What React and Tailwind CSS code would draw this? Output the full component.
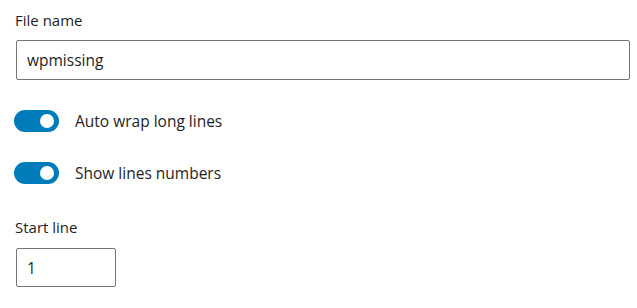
import React, { useState } from "react";

const Toggle = ({ label }) => {
  const [on, setOn] = useState(true);
  return (
    <label className="flex items-center gap-4 -ml-[2px] cursor-pointer">
      <button
        type="button"
        onClick={() => setOn(!on)}
        className={`relative h-[22px] w-[45px] rounded-full ${on ? "bg-[#007cba]" : "bg-[#949494]"}`}
      >
        <span
          className={`absolute top-[4px] h-[14px] w-[14px] rounded-full bg-white ${on ? "left-[26px]" : "left-[5px]"}`}
        />
      </button>
      <span className="text-[15.5px] leading-5 text-[#1e1e1e]">{label}</span>
    </label>
  );
};

const App = () => {
  return (
    <div className="w-[637px] h-[308px] bg-white px-4 pt-[10px] font-['Open_Sans',sans-serif] text-[#1e1e1e]">
      {/* file name */}
      <div className="text-[15px] leading-5 -ml-[1px]">File name</div>
      <input
        defaultValue="wpmissing"
        className="mt-[10px] block h-[40px] w-[614px] rounded-[2px] border border-[#757575] px-[10px] text-[15.5px] text-[#1e1e1e] outline-none"
      />

      {/* toggles */}
      <div className="mt-[30px]">
        <Toggle label="Auto wrap long lines" />
      </div>
      <div className="mt-[30px]">
        <Toggle label="Show lines numbers" />
      </div>

      {/* start line */}
      <div className="mt-[33px] text-[15px] leading-5 -ml-[1px]">Start line</div>
      <input
        type="text"
        defaultValue="1"
        className="mt-[11px] block h-[39px] w-[100px] rounded-[2px] border border-[#757575] px-[10px] text-[15.5px] text-[#1e1e1e] outline-none"
      />
    </div>
  );
};

export default App;
